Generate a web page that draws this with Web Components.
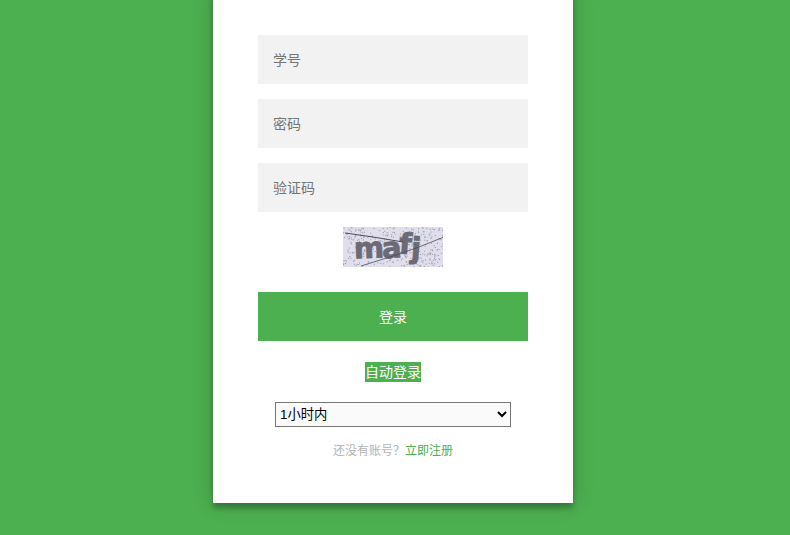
<!DOCTYPE html>
<html lang="zh">
<head>
<meta charset="utf-8">
<title>登录</title>
<style>
html, body { margin: 0; height: 100%; overflow: hidden; }
body { background: #4caf50; font-family: Roboto, "Noto Sans CJK SC", sans-serif; }
</style>
</head>
<body>
<login-page>
  <login-form>
    <login-field placeholder="学号"></login-field>
    <login-field placeholder="密码" type="password"></login-field>
    <login-field placeholder="验证码"></login-field>
    <captcha-image></captcha-image>
    <login-button>登录</login-button>
    <auto-login>自动登录</auto-login>
    <login-footer>还没有账号？<a href="#" slot="link">立即注册</a></login-footer>
  </login-form>
</login-page>
<script>
customElements.define('login-page', class extends HTMLElement {
  connectedCallback() {
    const shadow = this.attachShadow({mode: 'open'})
    shadow.innerHTML = `
    <style>
      :host { display: flex; justify-content: center; padding-right: 4px; }
    </style>
    <slot></slot>`
  }
})

customElements.define('login-form', class extends HTMLElement {
  connectedCallback() {
    const shadow = this.attachShadow({mode: 'open'})
    shadow.innerHTML = `
    <style>
      :host {
        display: flex;
        flex-direction: column;
        align-items: center;
        box-sizing: border-box;
        width: 360px;
        height: 513px;
        margin-top: -10px;
        padding: 45px;
        background: #fff;
        box-shadow: 0 0 20px 0 rgba(0, 0, 0, .2), 0 5px 5px 0 rgba(0, 0, 0, .24);
      }
    </style>
    <slot></slot>`
  }
})

customElements.define('login-field', class extends HTMLElement {
  connectedCallback() {
    const shadow = this.attachShadow({mode: 'open'})
    const placeholder = this.getAttribute('placeholder')
    const type = this.getAttribute('type') || 'text'
    shadow.innerHTML = `
    <style>
      :host { display: block; width: 270px; margin-bottom: 15px; }
      input {
        display: block;
        box-sizing: border-box;
        width: 100%;
        height: 49px;
        padding: 15px;
        border: 0;
        outline: 0;
        background: #f2f2f2;
        font: 14px Roboto, "Noto Sans CJK SC", sans-serif;
      }
      input::placeholder { color: #757575; }
    </style>
    <input type="${type}" placeholder="${placeholder}">`
  }
})

customElements.define('captcha-image', class extends HTMLElement {
  connectedCallback() {
    const shadow = this.attachShadow({mode: 'open'})
    // fixed seed, the noise has to come out the same on every load
    let seed = 7
    const next = () => (seed = (seed * 16807) % 2147483647) / 2147483647
    let dots = ''
    for (let i = 0; i < 360; i++) {
      dots += `<rect x="${(next() * 100).toFixed(1)}" y="${(next() * 40).toFixed(1)}" width="1" height="1"/>`
    }
    shadow.innerHTML = `
    <style>
      :host { display: block; width: 100px; height: 40px; margin-bottom: 25px; }
      svg { display: block; }
      text {
        font: bold 29px "DejaVu Sans", sans-serif;
        fill: #6b6a76;
        stroke: #6b6a76;
        stroke-width: .8;
      }
    </style>
    <svg width="100" height="40" viewBox="0 0 100 40">
      <rect width="100" height="40" fill="#dfdeea"/>
      <g fill="#77768a" opacity=".7">${dots}</g>
      <text x="11" y="31" transform="rotate(-2 25 25)">m</text>
      <text x="39" y="31" transform="rotate(-4 48 25)">a</text>
      <text x="56" y="27" transform="rotate(4 62 20)">f</text>
      <text x="68" y="31" transform="rotate(4 73 25)">j</text>
      <path d="M2 6 L30 10 L60 15" stroke="#4d4c60" stroke-width="1" fill="none"/>
      <path d="M18 39 L50 29 L76 20 L101 10" stroke="#4d4c60" stroke-width=".8" fill="none"/>
    </svg>`
  }
})

customElements.define('login-button', class extends HTMLElement {
  connectedCallback() {
    const shadow = this.attachShadow({mode: 'open'})
    shadow.innerHTML = `
    <style>
      :host { display: block; width: 270px; margin-bottom: 21px; }
      button {
        display: block;
        box-sizing: border-box;
        width: 100%;
        height: 49px;
        padding: 0 0 2px;
        border: 0;
        background: #4caf50;
        color: #fff;
        font: 14px Roboto, "Noto Sans CJK SC", sans-serif;
      }
    </style>
    <button><slot></slot></button>`
  }
})

customElements.define('auto-login', class extends HTMLElement {
  connectedCallback() {
    const shadow = this.attachShadow({mode: 'open'})
    shadow.innerHTML = `
    <style>
      :host { display: flex; flex-direction: column; align-items: center; width: 270px; }
      .label {
        height: 20px;
        line-height: 20px;
        background: #4caf50;
        color: #fff;
        font-size: 14px;
      }
      select {
        box-sizing: border-box;
        width: 236px;
        height: 25px;
        margin: 20px 0 15px;
        padding: 0;
        border: 1px solid #767676;
        border-radius: 0;
        background-color: #fafafa;
        color: #000;
        font: 13.33px "Liberation Sans", "Noto Sans CJK SC", sans-serif;
      }
    </style>
    <div class="label"><slot></slot></div>
    <select>
      <option>1小时内</option>
      <option>1天内</option>
      <option>1周内</option>
    </select>`
  }
})

customElements.define('login-footer', class extends HTMLElement {
  connectedCallback() {
    const shadow = this.attachShadow({mode: 'open'})
    shadow.innerHTML = `
    <style>
      :host {
        display: block;
        width: 270px;
        text-align: center;
        color: #b3b3b3;
        font-size: 12px;
        line-height: 18px;
      }
      ::slotted(a) { color: #4caf50; text-decoration: none; }
    </style>
    <slot></slot><slot name="link"></slot>`
  }
})
</script>
</body>
</html>
